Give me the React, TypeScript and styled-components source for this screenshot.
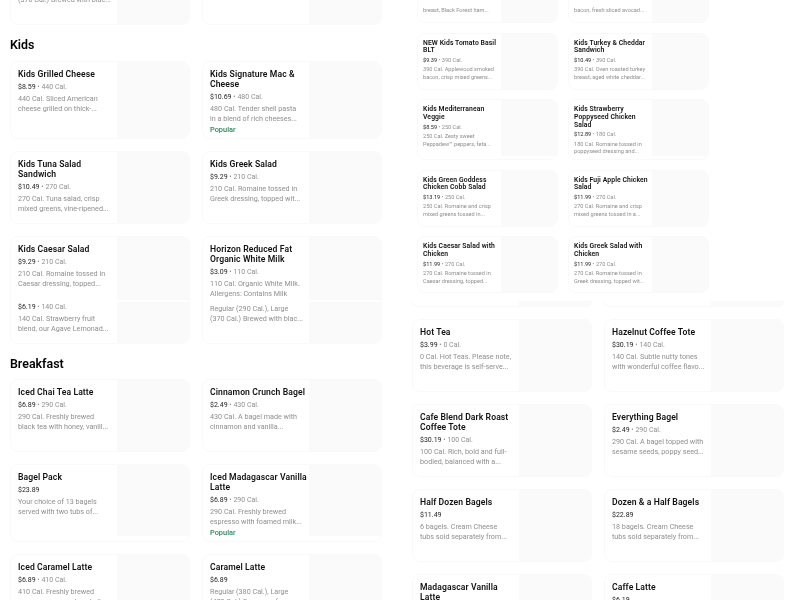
import React from "react";
import styled, { createGlobalStyle } from "styled-components";

const Global = createGlobalStyle`
  html, body { margin: 0; padding: 0; background: #fff; }
  body { width: 800px; height: 600px; overflow: hidden; font-family: Roboto, "Liberation Sans", sans-serif; }
`;

type Item = {
  t: string;
  p: string;
  c?: string;
  d: string[];
  pop?: boolean;
  more?: { gap: number; p?: string; c?: string; d: string[] };
};
type Row = { a: Item; b: Item; h: number; seam?: number; end?: number };

const NB = "\u00a0";

const Page = styled.div`
  display: grid;
  grid-template-columns: 400px 400px;
  width: 800px;
  height: 600px;
  overflow: hidden;
  filter: blur(0.25px);
  will-change: opacity;
`;
const Left = styled.div`
  display: flex;
  flex-direction: column;
  padding: 0 18px 0 10px;
  margin-top: -26px;
`;
const Right = styled.div`
  display: flex;
  flex-direction: column;
  margin-top: -27px;
`;
const Heading = styled.h2<{ $top: number; $bottom: number }>`
  margin: ${(p) => p.$top}px 0 ${(p) => p.$bottom}px;
  font-size: 12.4px;
  line-height: 18px;
  font-weight: 600;
  color: #000;
`;
const Grid = styled.div<{ $small?: boolean }>`
  display: grid;
  grid-template-columns: repeat(2, ${(p) => (p.$small ? 141.5 : 180)}px);
  column-gap: ${(p) => (p.$small ? 9.5 : 12)}px;
  row-gap: ${(p) => (p.$small ? 9.5 : 12)}px;
`;
const Card = styled.div<{ $h: number }>`
  display: flex;
  height: ${(p) => p.$h}px;
  border: 1px solid #f9f9f9;
  border-radius: 8px;
  box-sizing: border-box;
  overflow: hidden;
`;
const Body = styled.div<{ $small?: boolean }>`
  flex: 1;
  min-width: 0;
  padding: ${(p) => (p.$small ? "6px 0 0 5.5px" : "7px 0 0 7px")};
`;
const Thumb = styled.div<{ $small?: boolean; $seam?: number; $end?: number }>`
  width: ${(p) => (p.$small ? 56 : 72)}px;
  flex: none;
  background: ${(p) =>
    p.$seam
      ? `linear-gradient(#fafafa ${p.$seam}px, #fff ${p.$seam}px, #fff ${p.$seam + 2}px, #fafafa ${p.$seam + 2}px)`
      : p.$end
        ? `linear-gradient(#fafafa ${p.$end}px, #fff ${p.$end}px)`
        : "#fafafa"};
`;
const Title = styled.div<{ $small?: boolean }>`
  font-size: ${(p) => (p.$small ? 6.8 : 8.6)}px;
  line-height: ${(p) => (p.$small ? 7.8 : 10)}px;
  font-weight: 600;
  letter-spacing: 0.1px;
  color: #111;
  margin-bottom: ${(p) => (p.$small ? 2 : 2.5)}px;
  white-space: nowrap;
`;
const Price = styled.div<{ $small?: boolean }>`
  font-size: ${(p) => (p.$small ? 5.6 : 7)}px;
  line-height: ${(p) => (p.$small ? 7.8 : 10)}px;
  color: #222;
  margin-bottom: ${(p) => (p.$small ? 1.5 : 2)}px;
  white-space: nowrap;
`;
const Cal = styled.span`
  color: #8f8f8f;
`;
const Desc = styled.div<{ $small?: boolean }>`
  font-size: ${(p) => (p.$small ? 5.6 : 7.2)}px;
  line-height: ${(p) => (p.$small ? 7.8 : 10)}px;
  color: #8f8f8f;
  white-space: nowrap;
`;
const Popular = styled.div`
  font-size: 7.4px;
  line-height: 10px;
  margin-top: 1px;
  font-weight: 500;
  color: #2f8560;
`;
const More = styled.div<{ $gap: number }>`
  margin-top: ${(p) => p.$gap}px;
`;
const SmallWrap = styled.div`
  padding: 0 0 0 16.5px;
  margin-bottom: 8px;
`;
const LargeWrap = styled.div`
  padding-left: 12px;
`;
const Remnant = styled.div`
  display: grid;
  grid-template-columns: repeat(2, 180px);
  column-gap: 12px;
  padding-left: 12px;
  margin-bottom: 12px;
`;
const RemnantCard = styled.div`
  display: flex;
  height: 5px;
  border: 1px solid #f9f9f9;
  border-top: none;
  border-radius: 0 0 8px 8px;
  overflow: hidden;
`;

const MenuCard = ({ i, r, small }: { i: Item; r: Row; small?: boolean }) => (
  <Card $h={r.h}>
    <Body $small={small}>
      <Title $small={small}>
        {i.t.split("|").map((l) => (
          <div key={l}>{l}</div>
        ))}
      </Title>
      <Price $small={small}>
        {i.p}
        {i.c && <Cal> • {i.c}</Cal>}
      </Price>
      {i.d.map((l) => (
        <Desc key={l} $small={small}>
          {l}
        </Desc>
      ))}
      {i.pop && <Popular>Popular</Popular>}
      {i.more && (
        <More $gap={i.more.gap}>
          {i.more.p && (
            <Price>
              {i.more.p}
              <Cal> • {i.more.c}</Cal>
            </Price>
          )}
          {i.more.d.map((l) => (
            <Desc key={l}>{l}</Desc>
          ))}
        </More>
      )}
    </Body>
    <Thumb $small={small} $seam={r.seam} $end={r.end} />
  </Card>
);

const Rows = ({ rows, small }: { rows: Row[]; small?: boolean }) => (
  <Grid $small={small}>
    {rows.map((r, n) => (
      <React.Fragment key={n}>
        <MenuCard i={r.a} r={r} small={small} />
        <MenuCard i={r.b} r={r} small={small} />
      </React.Fragment>
    ))}
  </Grid>
);

const topLeft: Row[] = [
  {
    a: { t: NB, p: "", d: ["(370 Cal.) Brewed with blac..."] },
    b: { t: NB, p: "", d: [] },
    h: 51,
  },
];

const kids: Row[] = [
  {
    a: { t: "Kids Grilled Cheese", p: "$8.59", c: "440 Cal.", d: ["440 Cal. Sliced American", "cheese grilled on thick-..."] },
    b: { t: "Kids Signature Mac &|Cheese", p: "$10.69", c: "480 Cal.", d: ["480 Cal. Tender shell pasta", "in a blend of rich cheeses..."], pop: true },
    h: 78,
  },
  {
    a: { t: "Kids Tuna Salad|Sandwich", p: "$10.49", c: "270 Cal.", d: ["270 Cal. Tuna salad, crisp", "mixed greens, vine-ripened..."] },
    b: { t: "Kids Greek Salad", p: "$9.29", c: "210 Cal.", d: ["210 Cal. Romaine tossed in", "Greek dressing, topped wit..."] },
    h: 73,
  },
  {
    a: {
      t: "Kids Caesar Salad",
      p: "$9.29",
      c: "210 Cal.",
      d: ["210 Cal. Romaine tossed in", "Caesar dressing, topped..."],
      more: { gap: 13, p: "$6.19", c: "140 Cal.", d: ["140 Cal. Strawberry fruit", "blend, our Agave Lemonad..."] },
    },
    b: {
      t: "Horizon Reduced Fat|Organic White Milk",
      p: "$3.09",
      c: "110 Cal.",
      d: ["110 Cal. Organic White Milk.", "Allergens: Contains Milk"],
      more: { gap: 5, d: ["Regular (290 Cal.), Large", "(370 Cal.) Brewed with blac..."] },
    },
    h: 108,
    seam: 63,
  },
];

const breakfast: Row[] = [
  {
    a: { t: "Iced Chai Tea Latte", p: "$6.89", c: "290 Cal.", d: ["290 Cal. Freshly brewed", "black tea with honey, vanill..."] },
    b: { t: "Cinnamon Crunch Bagel", p: "$2.49", c: "430 Cal.", d: ["430 Cal. A bagel made with", "cinnamon and vanilla..."] },
    h: 73,
  },
  {
    a: { t: "Bagel Pack", p: "$23.89", d: ["Your choice of 13 bagels", "served with two tubs of..."] },
    b: { t: "Iced Madagascar Vanilla|Latte", p: "$6.89", c: "290 Cal.", d: ["290 Cal. Freshly brewed", "espresso with foamed milk..."], pop: true },
    h: 78,
    end: 71,
  },
  {
    a: { t: "Iced Caramel Latte", p: "$6.89", c: "410 Cal.", d: ["410 Cal. Freshly brewed", "espresso, caramel, and oil..."] },
    b: { t: "Caramel Latte", p: "$6.89", d: ["Regular (380 Cal.), Large", "(470 Cal.) Espresso, foame..."] },
    h: 73,
  },
];

const small: Row[] = [
  {
    a: { t: NB, p: NB, d: [NB, "breast, Black Forest ham..."] },
    b: { t: NB, p: NB, d: [NB, "bacon, fresh sliced avocad..."] },
    h: 50,
  },
  {
    a: { t: "NEW Kids Tomato Basil|BLT", p: "$9.39", c: "390 Cal.", d: ["390 Cal. Applewood smoked", "bacon, crisp mixed greens..."] },
    b: { t: "Kids Turkey & Cheddar|Sandwich", p: "$10.49", c: "390 Cal.", d: ["390 Cal. Oven roasted turkey", "breast, aged white cheddar..."] },
    h: 57,
  },
  {
    a: { t: "Kids Mediterranean|Veggie", p: "$8.59", c: "250 Cal.", d: ["250 Cal. Zesty sweet", "Peppadew™ peppers, feta..."] },
    b: { t: "Kids Strawberry|Poppyseed Chicken|Salad", p: "$12.89", c: "180 Cal.", d: ["180 Cal. Romaine tossed in", "poppyseed dressing and..."] },
    h: 61,
    end: 56,
  },
  {
    a: { t: "Kids Green Goddess|Chicken Cobb Salad", p: "$13.19", c: "250 Cal.", d: ["250 Cal. Romaine and crisp", "mixed greens tossed in..."] },
    b: { t: "Kids Fuji Apple Chicken|Salad", p: "$11.99", c: "270 Cal.", d: ["270 Cal. Romaine and crisp", "mixed greens tossed in a..."] },
    h: 57,
  },
  {
    a: { t: "Kids Caesar Salad with|Chicken", p: "$11.99", c: "270 Cal.", d: ["270 Cal. Romaine tossed in", "Caesar dressing, topped..."] },
    b: { t: "Kids Greek Salad with|Chicken", p: "$11.99", c: "270 Cal.", d: ["270 Cal. Romaine tossed in", "Greek dressing, topped wit..."] },
    h: 57,
  },
];

const large: Row[] = [
  {
    a: { t: "Hot Tea", p: "$3.99", c: "0 Cal.", d: ["0 Cal. Hot Teas. Please note,", "this beverage is self-serve..."] },
    b: { t: "Hazelnut Coffee Tote", p: "$30.19", c: "140 Cal.", d: ["140 Cal. Subtle nutty tones", "with wonderful coffee flavo..."] },
    h: 73,
  },
  {
    a: { t: "Cafe Blend Dark Roast|Coffee Tote", p: "$30.19", c: "100 Cal.", d: ["100 Cal. Rich, bold and full-", "bodied, balanced with a..."] },
    b: { t: "Everything Bagel", p: "$2.49", c: "290 Cal.", d: ["290 Cal. A bagel topped with", "sesame seeds, poppy seed..."] },
    h: 73,
  },
  {
    a: { t: "Half Dozen Bagels", p: "$11.49", d: ["6 bagels. Cream Cheese", "tubs sold separately from..."] },
    b: { t: "Dozen & a Half Bagels", p: "$22.89", d: ["18 bagels. Cream Cheese", "tubs sold separately from..."] },
    h: 73,
  },
  {
    a: { t: "Madagascar Vanilla|Latte", p: "$6.89", c: "290 Cal.", d: ["290 Cal."] },
    b: { t: "Caffe Latte", p: "$6.19", d: ["Regular"] },
    h: 73,
  },
];

export default function App() {
  return (
    <Page>
      <Global />
      <Left>
        <Rows rows={topLeft} />
        <Heading $top={11} $bottom={7}>Kids</Heading>
        <Rows rows={kids} />
        <Heading $top={11} $bottom={6}>Breakfast</Heading>
        <Rows rows={breakfast} />
      </Left>
      <Right>
        <SmallWrap>
          <Rows rows={small} small />
        </SmallWrap>
        <Remnant>
          <RemnantCard>
            <Body />
            <Thumb />
          </RemnantCard>
          <RemnantCard>
            <Body />
            <Thumb />
          </RemnantCard>
        </Remnant>
        <LargeWrap>
          <Rows rows={large} />
        </LargeWrap>
      </Right>
    </Page>
  );
}
